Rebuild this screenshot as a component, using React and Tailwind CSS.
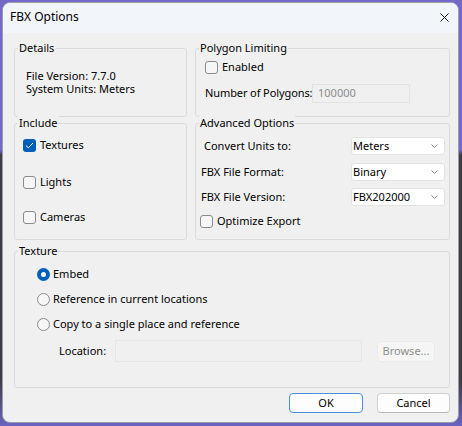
import React from "react";

function Group({ label, className, children }) {
  return (
    <div className={"border border-[#dcdcdc] rounded-[3px] flex flex-col " + className}>
      <span className="-mt-[9px] ml-[3px] px-[1px] w-fit bg-[#f0f0f0] leading-[16px] h-[16px] whitespace-nowrap">
        {label}
      </span>
      {children}
    </div>
  );
}

function Check({ checked }) {
  if (checked) {
    return (
      <span className="w-[13px] h-[13px] rounded-[3px] bg-[#005fb8] flex items-center justify-center shrink-0">
        <svg width="9" height="7" viewBox="0 0 9 7">
          <polyline points="1,3.6 3.3,5.8 8,1" fill="none" stroke="#ffffff" strokeWidth="1" />
        </svg>
      </span>
    );
  }
  return <span className="w-[13px] h-[13px] rounded-[3px] border border-[#8a8a8a] bg-[#f6f6f6] shrink-0" />;
}

function Radio({ checked }) {
  if (checked) {
    return (
      <span className="w-[13px] h-[13px] rounded-full bg-[#005fb8] flex items-center justify-center shrink-0">
        <span className="w-[5px] h-[5px] rounded-full bg-white" />
      </span>
    );
  }
  return <span className="w-[13px] h-[13px] rounded-full border border-[#8a8a8a] bg-[#f6f6f6] shrink-0" />;
}

function Select({ value }) {
  return (
    <div className="w-[94px] h-[18px] bg-white border border-[#e3e3e3] rounded-[3px] flex items-center justify-between pl-[1px] pr-[6px]">
      <span>{value}</span>
      <svg width="7" height="4" viewBox="0 0 7 4">
        <polyline points="0.5,0.5 3.5,3.5 6.5,0.5" fill="none" stroke="#8a8a8a" strokeWidth="1" />
      </svg>
    </div>
  );
}

export default function App() {
  return (
    <div className="w-[462px] h-[426px] bg-[linear-gradient(180deg,#7468c8_0px,#7468c8_150px,#3f3d44_155px,#3f3d44_380px,#6a62c0_426px)] pt-[2px] pl-[2px] font-['Noto_Sans',sans-serif] text-[11px] text-black">
      <div className="w-[457px] h-[421px] rounded-[8px] border border-[#9c9cae] overflow-hidden flex flex-col bg-[#f0f0f0]">
        <div className="h-[30px] shrink-0 bg-[#f2f5fa] flex items-center justify-between pl-[7px] pr-[9px] pb-[2px]">
          <span className="text-[12px]">FBX Options</span>
          <svg width="9" height="9" viewBox="0 0 9 9">
            <line x1="0.5" y1="0.5" x2="8.5" y2="8.5" stroke="#1a1a1a" strokeWidth="1" />
            <line x1="8.5" y1="0.5" x2="0.5" y2="8.5" stroke="#1a1a1a" strokeWidth="1" />
          </svg>
        </div>
        <div className="flex-1 pt-[15px] pl-[11px] pr-[8px] flex flex-col">
          <div className="flex gap-[8px] h-[69px]">
            <Group label="Details" className="w-[173px]">
              <div className="mt-[13px] pl-[11px] leading-[13px]">
                <div>File Version: 7.7.0</div>
                <div>System Units: Meters</div>
              </div>
            </Group>
            <Group label="Polygon Limiting" className="w-[255px]">
              <div className="mt-[5px] pl-[9px] flex items-center gap-[4px] h-[13px]">
                <Check />
                <span>Enabled</span>
              </div>
              <div className="mt-[10px] pl-[9px] flex items-center h-[19px]">
                <span className="w-[107px] whitespace-nowrap tracking-[-0.1px]">Number of Polygons:</span>
                <div className="w-[98px] h-[19px] border border-[#e3e3e3] flex items-center pl-[5px] text-[#8c8c8c]">
                  100000
                </div>
              </div>
            </Group>
          </div>

          <div className="flex gap-[8px] h-[117px] mt-[6px]">
            <Group label="Include" className="w-[173px]">
              <div className="mt-[8px] pl-[8px] flex items-center gap-[4px] h-[13px]">
                <Check checked />
                <span>Textures</span>
              </div>
              <div className="mt-[24px] pl-[8px] flex items-center gap-[4px] h-[13px]">
                <Check />
                <span>Lights</span>
              </div>
              <div className="mt-[22px] pl-[8px] flex items-center gap-[4px] h-[13px]">
                <Check />
                <span>Cameras</span>
              </div>
            </Group>
            <Group label="Advanced Options" className="w-[255px]">
              <div className="mt-[6px] h-[18px] flex items-center justify-between pr-[4px]">
                <span className="ml-[8px]">Convert Units to:</span>
                <Select value="Meters" />
              </div>
              <div className="mt-[8px] h-[18px] flex items-center justify-between pr-[4px]">
                <span className="ml-[5px]">FBX File Format:</span>
                <Select value="Binary" />
              </div>
              <div className="mt-[7px] h-[18px] flex items-center justify-between pr-[4px]">
                <span className="ml-[5px]">FBX File Version:</span>
                <Select value="FBX202000" />
              </div>
              <div className="mt-[9px] ml-[4px] flex items-center gap-[4px] h-[13px]">
                <Check />
                <span>Optimize Export</span>
              </div>
            </Group>
          </div>

          <Group label="Texture" className="w-[436px] h-[137px] mt-[11px]">
            <div className="mt-[9px] ml-[22px] flex items-center gap-[3px] h-[13px]">
              <Radio checked />
              <span>Embed</span>
            </div>
            <div className="mt-[12px] ml-[22px] flex items-center gap-[3px] h-[13px]">
              <Radio />
              <span>Reference in current locations</span>
            </div>
            <div className="mt-[12px] ml-[22px] flex items-center gap-[3px] h-[13px]">
              <Radio />
              <span>Copy to a single place and reference</span>
            </div>
            <div className="mt-[9px] ml-[44px] flex items-center h-[22px]">
              <span className="w-[56px]">Location:</span>
              <div className="w-[247px] h-[22px] border border-[#e6e6e6]" />
              <div className="ml-[15px] w-[58px] h-[21px] bg-[#f5f5f5] border border-[#ebebeb] rounded-[3px] flex items-center justify-center text-[#8f8f8f]">
                Browse...
              </div>
            </div>
          </Group>

          <div className="mt-[5px] flex justify-end gap-[14px] w-[436px]">
            <div className="w-[74px] h-[20px] bg-[#fdfdfd] border border-[#4a90d9] rounded-[4px] flex items-center justify-center">
              OK
            </div>
            <div className="w-[73px] h-[20px] bg-[#fdfdfd] border border-[#d0d0d0] border-b-[#b8b8b8] rounded-[4px] flex items-center justify-center">
              Cancel
            </div>
          </div>
        </div>
      </div>
    </div>
  );
}
